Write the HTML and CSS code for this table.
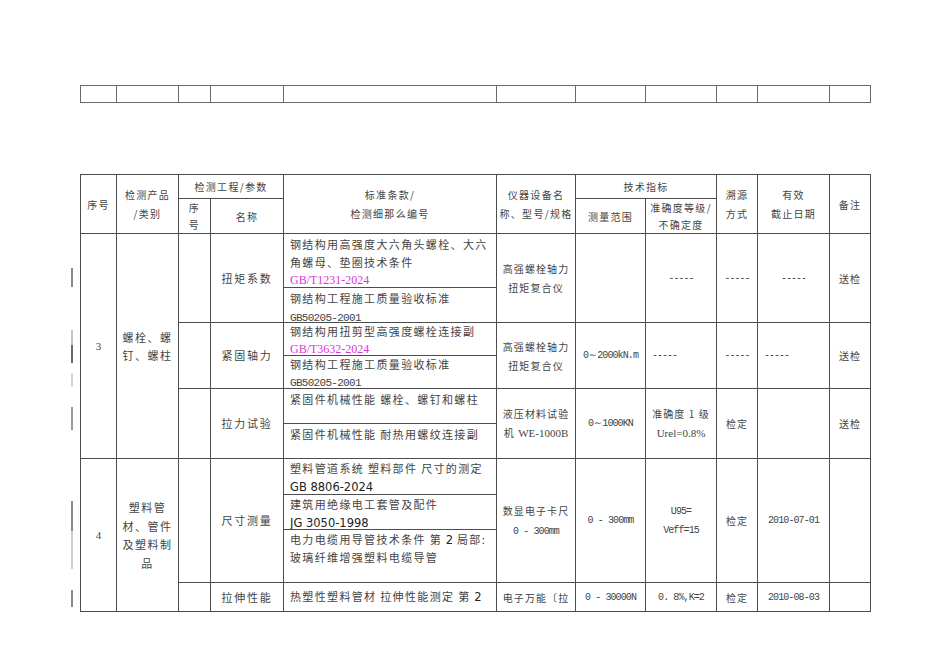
FILE: index.html
```html
<!DOCTYPE html>
<html lang="zh">
<head>
<meta charset="utf-8">
<title>检测能力表</title>
<link rel="stylesheet" href="styles.css">
</head>
<body>
<div class="page">
  <span class="bar b1"></span>
  <span class="bar b2"></span>
  <span class="bar b3"></span>
  <span class="bar b4"></span>
  <span class="bar b5"></span>
  <span class="bar b6"></span>
  <span class="bar b7"></span>
  <span class="bar b8"></span>

  <table class="top">
    <colgroup>
      <col class="c1"><col class="c2"><col class="c3"><col class="c4"><col class="c5"><col class="c6"><col class="c7"><col class="c8"><col class="c9"><col class="c10"><col class="c11">
    </colgroup>
    <tr><td></td><td></td><td></td><td></td><td></td><td></td><td></td><td></td><td></td><td></td><td></td></tr>
  </table>

  <table class="main">
    <colgroup>
      <col class="c1"><col class="c2"><col class="c3"><col class="c4"><col class="c5"><col class="c6"><col class="c7"><col class="c8"><col class="c9"><col class="c10"><col class="c11">
    </colgroup>
    <tr class="h1">
      <td rowspan="2" class="hd">序号</td>
      <td rowspan="2" class="hd">检测产品<br>/类别</td>
      <td colspan="2" class="hd">检测工程/参数</td>
      <td rowspan="2" class="hd">标准条款/<br>检测细那么编号</td>
      <td rowspan="2" class="hd">仪器设备名<br>称、型号/规格</td>
      <td colspan="2" class="hd">技术指标</td>
      <td rowspan="2" class="hd">溯源<br>方式</td>
      <td rowspan="2" class="hd">有效<br>截止日期</td>
      <td rowspan="2" class="hd">备注</td>
    </tr>
    <tr class="h2">
      <td class="hd tight"><div class="mid-in">序<br>号</div></td>
      <td class="hd">名称</td>
      <td class="hd">测量范围</td>
      <td class="hd tight"><div class="mid-in">准确度等级/<br>不确定度</div></td>
    </tr>

    <tr class="r3a">
      <td rowspan="6" class="idx">3</td>
      <td rowspan="6" class="prod">螺栓、螺<br>钉、螺柱</td>
      <td rowspan="2"></td>
      <td rowspan="2" class="name">扭矩系数</td>
      <td class="std"><div class="in">钢结构用高强度大六角头螺栓、大六<br>角螺母、垫圈技术条件<br><span class="pink">GB/T1231-2024</span></div></td>
      <td rowspan="2" class="eq">高强螺栓轴力<br>扭矩复合仪</td>
      <td rowspan="2"></td>
      <td rowspan="2" class="dash">-----</td>
      <td rowspan="2" class="dash">-----</td>
      <td rowspan="2" class="dash">-----</td>
      <td rowspan="2" class="eq">送检</td>
    </tr>
    <tr class="r3b">
      <td class="std"><div class="in">钢结构工程施工质量验收标准<br><span class="mono">GB50205-2001</span></div></td>
    </tr>
    <tr class="r3c">
      <td rowspan="2"></td>
      <td rowspan="2" class="name">紧固轴力</td>
      <td class="std"><div class="in sm">钢结构用扭剪型高强度螺栓连接副<br><span class="pink">GB/T3632-2024</span></div></td>
      <td rowspan="2" class="eq">高强螺栓轴力<br>扭矩复合仪</td>
      <td rowspan="2" class="num">0～2000kN.m</td>
      <td rowspan="2" class="dash left">-----</td>
      <td rowspan="2" class="dash">-----</td>
      <td rowspan="2" class="dash left">-----</td>
      <td rowspan="2" class="eq">送检</td>
    </tr>
    <tr class="r3d">
      <td class="std"><div class="in sm">钢结构工程施工质量验收标准<br><span class="mono">GB50205-2001</span></div></td>
    </tr>
    <tr class="r3e">
      <td rowspan="2"></td>
      <td rowspan="2" class="name">拉力试验</td>
      <td class="std"><div class="in">紧固件机械性能 螺栓、螺钉和螺柱</div></td>
      <td rowspan="2" class="eq">液压材料试验<br>机 <span class="times">WE-1000B</span></td>
      <td rowspan="2" class="num">0～1000KN</td>
      <td rowspan="2" class="eq">准确度 1 级<br><span class="times">Urel=0.8%</span></td>
      <td rowspan="2" class="eq">检定</td>
      <td rowspan="2"></td>
      <td rowspan="2" class="eq">送检</td>
    </tr>
    <tr class="r3f">
      <td class="std"><div class="in">紧固件机械性能 耐热用螺纹连接副</div></td>
    </tr>

    <tr class="r4a">
      <td rowspan="4" class="idx">4</td>
      <td rowspan="4" class="prod">塑料管<br>材、管件<br>及塑料制<br>品</td>
      <td rowspan="3"></td>
      <td rowspan="3" class="name">尺寸测量</td>
      <td class="std"><div class="in r4">塑料管道系统 塑料部件 尺寸的测定<br><span class="sans">GB 8806-2024</span></div></td>
      <td rowspan="3" class="eq">数显电子卡尺<br><span class="num">0 - 300mm</span></td>
      <td rowspan="3" class="num">0 - 300mm</td>
      <td rowspan="3" class="num">U95=<br>Veff=15</td>
      <td rowspan="3" class="eq">检定</td>
      <td rowspan="3" class="num">2010-07-01</td>
      <td rowspan="3"></td>
    </tr>
    <tr class="r4b">
      <td class="std"><div class="in r4">建筑用绝缘电工套管及配件<br><span class="sans">JG 3050-1998</span></div></td>
    </tr>
    <tr class="r4c">
      <td class="std"><div class="in r4c-in">电力电缆用导管技术条件 第 <span class="sans">2</span> 局部:<br>玻璃纤维增强塑料电缆导管</div></td>
    </tr>
    <tr class="r4d">
      <td></td>
      <td class="name">拉伸性能</td>
      <td class="std mid">热塑性塑料管材 拉伸性能测定 第 <span class="sans">2</span></td>
      <td class="eq">电子万能〔拉</td>
      <td class="num">0 - 30000N</td>
      <td class="num">0. 8%,K=2</td>
      <td class="eq">检定</td>
      <td class="num">2010-08-03</td>
      <td></td>
    </tr>
  </table>
</div>
</body>
</html>
```

FILE: styles.css
```css
* { box-sizing: border-box; }

body {
  margin: 0;
  background: #fff;
  font-family: "Noto Sans CJK SC", "Noto Sans", sans-serif;
  color: #444;
}

.page {
  position: relative;
  width: 950px;
  height: 672px;
  padding: 85px 0 0 80px;
}

table {
  border-collapse: collapse;
  table-layout: fixed;
  width: 790px;
}

.c1 { width: 36px; }
.c2 { width: 62px; }
.c3 { width: 32px; }
.c4 { width: 73px; }
.c5 { width: 213px; }
.c6 { width: 79px; }
.c7 { width: 70px; }
.c8 { width: 71px; }
.c9 { width: 41px; }
.c10 { width: 72px; }
.c11 { width: 41px; }

.top { margin-bottom: 71px; }
.top tr { height: 17px; }
.top td { border: 1px solid #6a6a6a; padding: 0; }

.main td {
  border: 1px solid #4d4d4d;
  padding: 0;
  text-align: center;
  vertical-align: middle;
  font-size: 10px;
  letter-spacing: 1.2px;
  line-height: 19px;
  white-space: nowrap;
  overflow: hidden;
}

.main .hd { font-size: 10px; letter-spacing: 1.3px; line-height: 19px; }
.main .tight { line-height: 17px; }
.mid-in { margin: -4px 0; }

.h1 { height: 24px; }
.h2 { height: 35px; }
.r3a { height: 54px; }
.r3b { height: 35px; }
.r3c { height: 33px; }
.r3d { height: 33px; }
.r3e { height: 35px; }
.r3f { height: 35px; }
.r4a { height: 36px; }
.r4b { height: 35px; }
.r4c { height: 53px; }
.r4d { height: 29px; }

.main .idx {
  font-family: "Liberation Serif", serif;
  font-size: 11px;
  letter-spacing: 0;
}

.main .prod { font-size: 11px; letter-spacing: 1.5px; line-height: 18.5px; }

.main .name { font-size: 11px; letter-spacing: 1.8px; }

.main .std {
  text-align: left;
  vertical-align: top;
  padding: 0 0 0 6px;
  font-size: 11px;
  letter-spacing: 1.35px;
  line-height: 17.5px;
}
.main .std.mid { vertical-align: middle; }

.in { padding-top: 2px; margin-bottom: -10px; }
.in.sm { padding-top: 0; line-height: 17px; }
.in.r4 { padding-top: 0; line-height: 18px; }
.in.r4c-in { padding-top: 1px; line-height: 17px; }

.main .eq { font-size: 10px; letter-spacing: 1.1px; line-height: 19px; }

.main .dash, .main .num, .mono {
  font-family: "Liberation Mono", monospace;
  letter-spacing: -0.9px;
}
.main .dash { font-size: 10px; letter-spacing: -1px; }
.main .dash.left { text-align: left; padding-left: 6px; }
.main .num { font-size: 10px; line-height: 19px; }

.mono { font-size: 11px; letter-spacing: -0.7px; }

.pink {
  font-family: "Liberation Serif", serif;
  font-size: 12px;
  letter-spacing: 0;
  color: #dc36dc;
}

.times {
  font-family: "Liberation Serif", serif;
  font-size: 11px;
  letter-spacing: 0;
}

.sans {
  font-family: "DejaVu Sans", sans-serif;
  font-size: 11.5px;
  letter-spacing: 0;
  color: #222;
}

.bar {
  position: absolute;
  left: 71px;
  width: 2px;
  background: #888;
}
.b1 { top: 268px; height: 19px; background: #8a8a8a; }
.b2 { top: 330px; height: 15px; background: #c4c4c4; }
.b3 { top: 345px; height: 18px; background: #6a6a6a; }
.b4 { top: 373px; height: 14px; background: #d4d4d4; }
.b5 { top: 407px; height: 23px; background: #9a9a9a; }
.b6 { top: 501px; height: 30px; background: #8a8a8a; }
.b7 { top: 531px; height: 38px; background: #d0d0d0; }
.b8 { top: 590px; height: 17px; background: #8a8a8a; }
```
